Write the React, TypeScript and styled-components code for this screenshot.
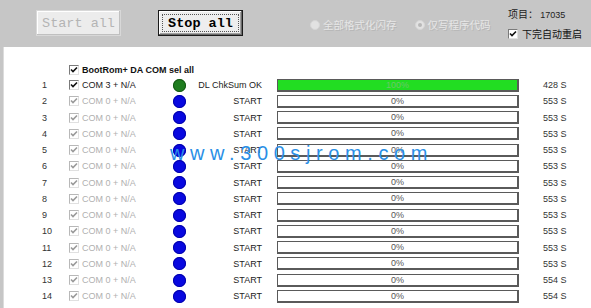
import React from 'react';
import styled, { createGlobalStyle } from 'styled-components';

const GlobalStyle = createGlobalStyle`
  html, body {
    margin: 0;
    padding: 0;
    background: #ffffff;
    overflow: hidden;
  }
  body {
    font-family: "Liberation Sans", "Noto Sans CJK SC", sans-serif;
  }
`;

type Row = { com: string; active: boolean; status: string; pct: number; time: string };

const rows: Row[] = [
  { com: 'COM 3 + N/A', active: true, status: 'DL ChkSum OK', pct: 100, time: '428 S' },
  ...Array.from({ length: 13 }, (_, i) => ({
    com: 'COM 0 + N/A',
    active: false,
    status: 'START',
    pct: 0,
    time: i >= 11 ? '554 S' : '553 S',
  })),
];

const Check = ({ disabled }: { disabled?: boolean }) => (
  <CheckBox $disabled={disabled}>
    <svg width="8" height="8" viewBox="0 0 8 8">
      <path d="M1 3.5 L3 5.5 L7 1.5" fill="none" stroke={disabled ? '#9a9a9a' : '#111'} strokeWidth="1.6" />
    </svg>
  </CheckBox>
);

const App = () => {
  return (
    <>
      <GlobalStyle />
      <Window>
        <Toolbar>
          <Button disabled>Start all</Button>
          <Button $focused>Stop all</Button>
          <RadioGroup>
            <Radio>
              <RadioDot />
              <RadioLabel>全部格式化闪存</RadioLabel>
            </Radio>
            <Radio>
              <RadioDot $checked />
              <RadioLabel>仅写程序代码</RadioLabel>
            </Radio>
          </RadioGroup>
          <InfoBlock>
            <Project>
              项目： <ProjectNum>17035</ProjectNum>
            </Project>
            <AutoRow>
              <Check />
              <span>下完自动重启</span>
            </AutoRow>
          </InfoBlock>
        </Toolbar>
        <Panel>
          <Table>
            <SelAll>
              <Check />
              <span>BootRom+ DA COM sel all</span>
            </SelAll>
            {rows.map((r, i) => (
              <RowLine key={i}>
                <Num>{i + 1}</Num>
                <Check disabled={!r.active} />
                <ComText $disabled={!r.active}>{r.com}</ComText>
                <Led $color={r.active ? 'green' : 'blue'} />
                <Status>{r.status}</Status>
                <Bar>
                  <BarFill style={{ width: `${r.pct}%` }} />
                  <BarText $done={r.pct === 100}>{r.pct}%</BarText>
                </Bar>
                <Time>{r.time}</Time>
              </RowLine>
            ))}
          </Table>
          <Watermark>www.300sjrom.com</Watermark>
        </Panel>
      </Window>
    </>
  );
};

const Window = styled.div`
  width: 591px;
  height: 308px;
  display: flex;
  flex-direction: column;
  background: #c6c6c6;
`;

const Toolbar = styled.div`
  height: 47px;
  flex: none;
  display: flex;
  align-items: flex-start;
  padding: 10px 0 0 36px;
  box-sizing: border-box;
  background: #c6c6c6;
`;

const Button = styled.button<{ $focused?: boolean }>`
  width: 85px;
  height: 26px;
  margin-right: 37px;
  font-family: "Liberation Mono", "DejaVu Sans Mono", monospace;
  font-size: 13.5px;
  font-weight: bold;
  color: #000;
  background: #eeeeee;
  border: 1px solid ${({ $focused }) => ($focused ? '#1a1a1a' : '#d8d8d8')};
  box-shadow: ${({ $focused }) =>
    $focused
      ? 'inset -1px -1px 0 #6a6a6a, inset 1px 1px 0 #ffffff, inset -2px -2px 0 #a0a0a0'
      : 'inset -1px -1px 0 #c0c0c0, inset 1px 1px 0 #ffffff'};
  padding: 0;
  outline: ${({ $focused }) => ($focused ? '1px dotted #555' : 'none')};
  outline-offset: -5px;

  &:disabled {
    color: #b4b4b4;
    font-weight: normal;
    background: #ececec;
  }
`;

const RadioGroup = styled.div`
  display: flex;
  gap: 18px;
  margin: 7px 0 0 30px;
`;

const Radio = styled.div`
  display: flex;
  align-items: center;
  gap: 3px;
`;

const RadioDot = styled.span<{ $checked?: boolean }>`
  width: 8px;
  height: 8px;
  border-radius: 50%;
  background: #e2e2e2;
  border: 1px solid #d6d6d6;
  position: relative;
  &::after {
    content: '';
    display: ${({ $checked }) => ($checked ? 'block' : 'none')};
    position: absolute;
    left: 2px;
    top: 2px;
    width: 4px;
    height: 4px;
    border-radius: 50%;
    background: #b8b8b8;
  }
`;

const RadioLabel = styled.span`
  font-family: "Noto Sans CJK SC", sans-serif;
  font-size: 10.5px;
  color: #e6e6e6;
  text-shadow: 1px 1px 0 #b6b6b6;
`;

const InfoBlock = styled.div`
  margin: -4px 9px 0 auto;
  width: 74px;
  display: flex;
  flex-direction: column;
  gap: 5px;
`;

const Project = styled.div`
  font-family: "Noto Sans CJK SC", sans-serif;
  font-size: 10px;
  color: #222;
`;

const ProjectNum = styled.span`
  font-family: "Liberation Sans", sans-serif;
  font-size: 9px;
`;

const AutoRow = styled.div`
  display: flex;
  align-items: center;
  gap: 4px;
  font-family: "Noto Sans CJK SC", sans-serif;
  font-size: 10px;
  color: #111;
  white-space: nowrap;
`;

const CheckBox = styled.span<{ $disabled?: boolean }>`
  width: 10px;
  height: 10px;
  box-sizing: border-box;
  display: inline-flex;
  align-items: center;
  justify-content: center;
  background: #fff;
  border: 1px solid ${({ $disabled }) => ($disabled ? '#b8b8b8' : '#7a7a7a')};
  border-right-color: #e0e0e0;
  border-bottom-color: #e0e0e0;
  flex: none;
`;

const Panel = styled.div`
  flex: 1;
  position: relative;
  background: #ffffff;
  margin-left: 3px;
  border-left: 1px solid #dcdcdc;
`;

const Table = styled.div`
  padding: 15px 0 0 38px;
`;

const SelAll = styled.div`
  display: flex;
  align-items: center;
  gap: 3px;
  margin-left: 27px;
  height: 15px;
  font-size: 9px;
  font-weight: bold;
  color: #111;
`;

const RowLine = styled.div`
  display: grid;
  grid-template-columns: 27px 13px 91px 17px 72px 15px 242px 24px auto;
  align-items: center;
  height: 16.25px;
  font-size: 9px;

  &:first-of-type {
    margin-top: 3px;
  }
`;

const Num = styled.span`
  grid-column: 1;
  color: #333;
`;

const ComText = styled.span<{ $disabled?: boolean }>`
  grid-column: 3;
  color: ${({ $disabled }) => ($disabled ? '#b0b0b0' : '#222')};
`;

const Led = styled.span<{ $color: 'green' | 'blue' }>`
  grid-column: 4;
  width: 13px;
  height: 13px;
  border-radius: 50%;
  background: ${({ $color }) => ($color === 'green' ? '#1f7d1f' : '#0808e0')};
  box-shadow: inset 0 0 0 1px ${({ $color }) => ($color === 'green' ? '#135513' : '#0000a8')};
`;

const Status = styled.span`
  grid-column: 5;
  text-align: right;
  white-space: nowrap;
  color: #222;
`;

const Bar = styled.div`
  grid-column: 7;
  position: relative;
  height: 13px;
  box-sizing: border-box;
  border: 1px solid #5a5a5a;
  border-right-width: 2px;
  border-bottom-width: 2px;
  background: #fff;
`;

const BarFill = styled.div`
  position: absolute;
  left: 0;
  top: 0;
  bottom: 0;
  background: #22dd22;
`;

const BarText = styled.span<{ $done?: boolean }>`
  position: absolute;
  inset: 0;
  display: flex;
  align-items: center;
  justify-content: center;
  font-size: 9px;
  color: ${({ $done }) => ($done ? '#6ac86a' : '#555')};
`;

const Time = styled.span`
  grid-column: 9;
  color: #333;
`;

const Watermark = styled.div`
  position: absolute;
  left: 166px;
  top: 95px;
  font-family: "Liberation Sans", sans-serif;
  font-size: 20px;
  letter-spacing: 5.6px;
  color: #2a8fe6;
  pointer-events: none;
`;

export default App;
